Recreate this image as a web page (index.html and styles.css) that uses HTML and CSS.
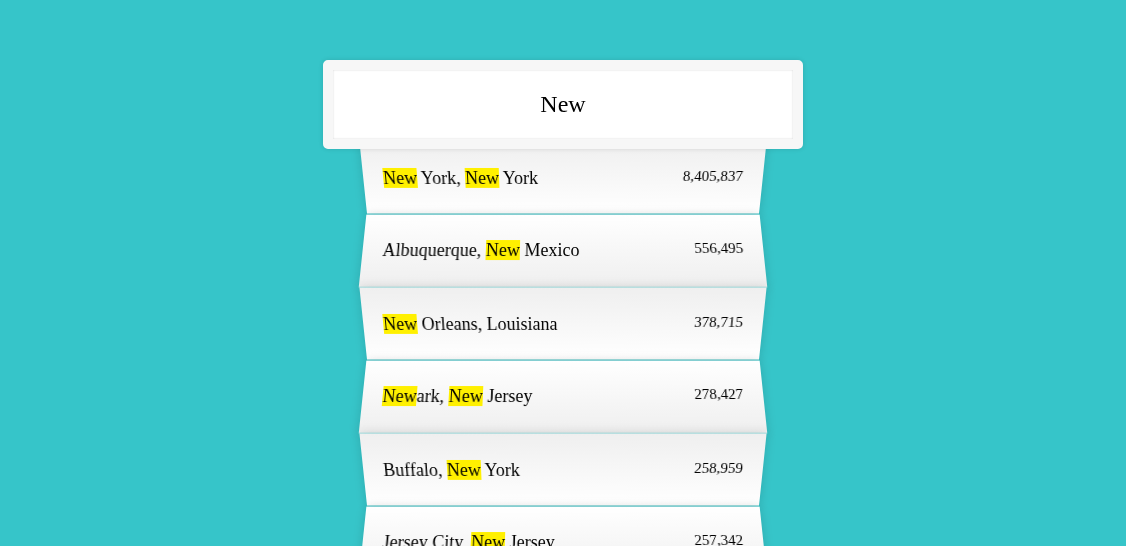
FILE: index.html
```html
<!DOCTYPE html>
<html lang="en">
<head>
<meta charset="UTF-8">
<title>Type Ahead</title>
<link rel="stylesheet" href="styles.css">
</head>
<body>
<form class="search-form">
  <input type="text" class="search" value="New" placeholder="City or State">
  <ul class="suggestions">
    <li><span class="name"><span class="hl">New</span> York, <span class="hl">New</span> York</span><span class="population">8,405,837</span></li>
    <li><span class="name">Albuquerque, <span class="hl">New</span> Mexico</span><span class="population">556,495</span></li>
    <li><span class="name"><span class="hl">New</span> Orleans, Louisiana</span><span class="population">378,715</span></li>
    <li><span class="name"><span class="hl">New</span>ark, <span class="hl">New</span> Jersey</span><span class="population">278,427</span></li>
    <li><span class="name">Buffalo, <span class="hl">New</span> York</span><span class="population">258,959</span></li>
    <li><span class="name">Jersey City, <span class="hl">New</span> Jersey</span><span class="population">257,342</span></li>
    <li><span class="name">Yonkers, <span class="hl">New</span> York</span><span class="population">199,766</span></li>
    <li><span class="name">Rochester, <span class="hl">New</span> York</span><span class="population">210,358</span></li>
  </ul>
</form>
</body>
</html>
```
FILE: styles.css
```css
html {
  box-sizing: border-box;
  background: #36c5c9;
  font-family: "Liberation Serif", "Times New Roman", serif;
  font-size: 18px;
}

*, *:before, *:after {
  box-sizing: inherit;
}

body {
  margin: 0;
  overflow: hidden;
}

.search-form {
  max-width: 400px;
  margin: 50px auto;
}

.search {
  display: block;
  margin: 0;
  width: 120%;
  left: -10%;
  position: relative;
  top: 10px;
  z-index: 2;
  padding: 21px 20px;
  text-align: center;
  outline: 0;
  border: 10px solid #f7f7f7;
  border-radius: 5px;
  font-family: "Liberation Serif", "Times New Roman", serif;
  font-size: 24px;
  color: #000;
  background: #fff;
  box-shadow: 0 0 5px rgba(0, 0, 0, 0.12), inset 0 0 2px rgba(0, 0, 0, 0.19);
}

.suggestions {
  margin: 0;
  padding: 0;
  position: relative;
  list-style: none;
}

.suggestions li {
  background: #fff;
  border-bottom: 1px solid rgba(54, 197, 201, 0.55);
  box-shadow: 0 0 10px rgba(0, 0, 0, 0.14);
  margin: 0;
  padding: 26px 20px 25px;
  display: flex;
  justify-content: space-between;
  text-transform: capitalize;
  color: #000;
}

.suggestions li:nth-child(even) {
  transform: perspective(100px) rotateX(3deg) translateY(2px) scale(1.001);
  background: linear-gradient(to bottom, #ffffff 0%, #efefef 100%);
}

.suggestions li:nth-child(odd) {
  transform: perspective(100px) rotateX(-3deg) translateY(3px);
  background: linear-gradient(to top, #ffffff 0%, #efefef 100%);
}

.population {
  font-size: 15px;
}

.hl {
  background: #fff000;
}
```
